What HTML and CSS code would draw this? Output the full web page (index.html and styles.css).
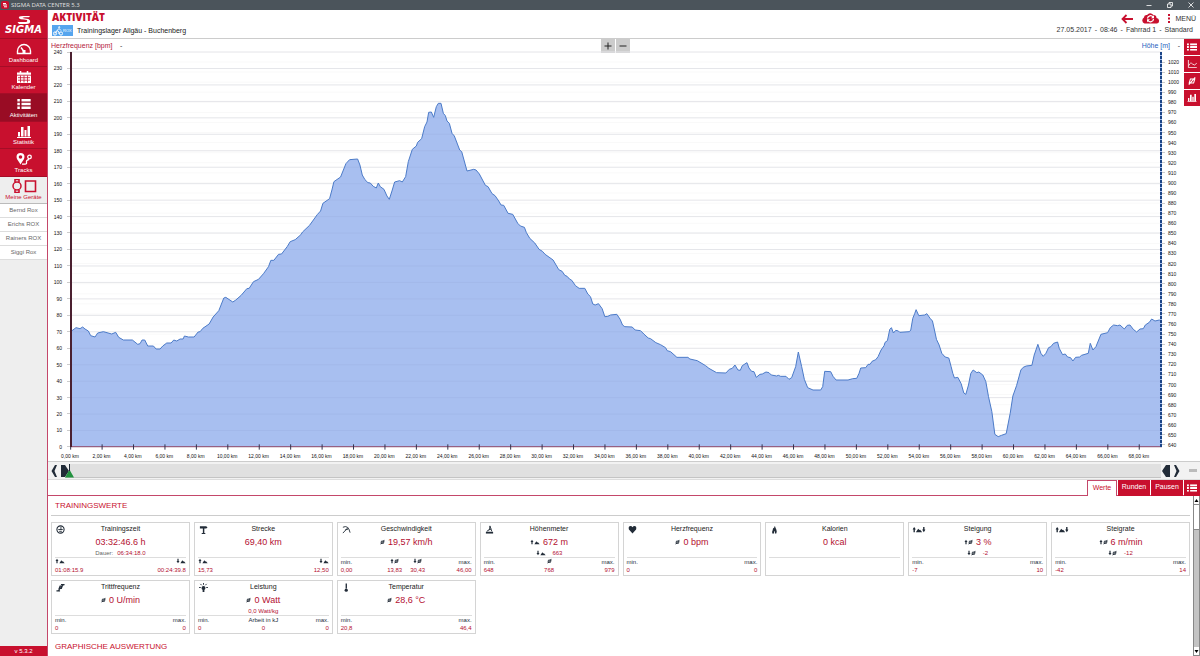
FILE: index.html
```html
<!DOCTYPE html>
<html lang="de">
<head>
    <meta charset="UTF-8">
    <meta name="viewport" content="width=device-width, initial-scale=1.0">
    <title>SIGMA DATA CENTER 5.3</title>
    <link rel="stylesheet" href="styles.css">
</head>
<body>

    <!-- shared icons -->
    <svg class="sprite" aria-hidden="true">
        <symbol id="up" viewBox="0 0 4 8"><path d="M2 1L4 4H2.8V7H1.2V4H0z"/></symbol>
        <symbol id="down" viewBox="0 0 4 8"><path d="M2 7L4 4H2.8V1H1.2V4H0z"/></symbol>
        <symbol id="hill" viewBox="0 0 7 8"><path d="M0 7L2.6 3L4 4.6L4.8 4.2L7 7z"/></symbol>
        <symbol id="avg" viewBox="0 0 6 8"><path d="M0.6 7L5.6 1.2M1.6 2.800H5L4.300 5.800H1z" fill="none" stroke="currentColor" stroke-width="1.2"/></symbol>
        <symbol id="list" viewBox="0 0 16 12"><path d="M0 0h3v3H0zM5 0h11v3H5zM0 4.5h3v3H0zM5 4.5h11v3H5zM0 9h3v3H0zM5 9h11v3H5z"/></symbol>
        <symbol id="bars" viewBox="0 0 14 12"><path d="M0 11h14v1H0zM1 6h2v4.500H1zM4 1h2.500v9.500H4zM7.500 4h2v6.500h-2zM10.500 0h2.500v10.500h-2.500z"/></symbol>
    </svg>

    <div class="titlebar">
        <svg class="app-icon" viewBox="0 0 8 8"><rect width="8" height="8" rx="2" fill="#c8102e"/><path d="M2 2.500h3M2 4h4M3 5.800h3" stroke="#fff"/></svg>
        <span class="app-name">SIGMA DATA CENTER 5.3</span>
        <div class="window-buttons">
            <button aria-label="Minimieren"><svg viewBox="0 0 6 6"><path d="M0.500 3.500h5"/></svg></button>
            <button aria-label="Verkleinern"><svg viewBox="0 0 6 6"><path d="M0.500 2h3.500v3.500h-3.500zM2 2V0.500h3.500V4H4"/></svg></button>
            <button aria-label="Schließen"><svg viewBox="0 0 6 6"><path d="M0.500 0.500l5 5M5.500 0.500l-5 5"/></svg></button>
        </div>
    </div>

    <div class="app">
        <aside class="sidebar">
            <div class="logo">
                <svg viewBox="0 0 14 9"><path d="M13 1H6Q1 1 2 3.200Q3 4.500 7 4.500L10 5Q11 7 8 7H0.500L2 9H9Q14 9 13 5.500Q12 3.500 8 3.500L5.500 3Q6 2.200 8 2.200H12z"/></svg>
                <span>SIGMA</span>
            </div>
            <nav class="menu">
                <a href="#dashboard">
                    <svg viewBox="0 0 16 12"><path d="M1.500 10.500V8a6.500 6.500 0 0 1 13 0v2.500zM8 8.500L5 4.500" fill="none" stroke="#fff" stroke-width="1.400"/><path d="M6.500 7h3v3h-3z"/></svg>
                    Dashboard
                </a>
                <a href="#kalender">
                    <svg viewBox="0 0 16 12"><path d="M1 1.500h14V12H1z"/><path d="M4.500 0v3M11.500 0v3" stroke="#fff" stroke-width="1.500"/><path d="M1 4.200h14M2 6.700h12M2 9.200h12M4.500 4.500v7M8 4.500v7M11.500 4.500v7" stroke="#c8102e" stroke-width=".8"/></svg>
                    Kalender
                </a>
                <a href="#aktivitaeten" class="active">
                    <svg viewBox="0 0 16 12"><use href="#list" y="1" height="10"/></svg>
                    Aktivitäten
                </a>
                <a href="#statistik">
                    <svg viewBox="0 0 16 12"><use href="#bars"/></svg>
                    Statistik
                </a>
                <a href="#tracks">
                    <svg viewBox="0 0 16 12"><path fill-rule="evenodd" d="M4.500 0a4 4 0 0 1 4 4c0 2.500-3 5-4 7.500C3.500 9 0.500 6.500 0.500 4a4 4 0 0 1 4-4zm0 2.200a1.800 1.800 0 1 0 0 3.600a1.800 1.800 0 0 0 0-3.600z"/><path d="M6 11.200h3q2 0 1.500-2t2.500-2.700" fill="none" stroke="#fff" stroke-width="1.300"/><circle cx="13.500" cy="4" r="1.800" fill="none" stroke="#fff" stroke-width="1.300"/></svg>
                    Tracks
                </a>
                <a href="#geraete" class="devices">
                    <svg viewBox="0 0 26 14"><path d="M4 3V0.500h4V3M4 11v2.500h4V11M14.500 2h10v10.500h-10z" fill="none" stroke="#c8102e" stroke-width="1.600"/><circle cx="6" cy="7" r="4" fill="none" stroke="#c8102e" stroke-width="1.500"/></svg>
                    Meine Geräte
                </a>
            </nav>
            <ul class="device-list">
                <li>Bernd Rox</li>
                <li>Erichs ROX</li>
                <li>Rainers ROX</li>
                <li>Siggi Rox</li>
            </ul>
            <div class="version">v 5.3.2</div>
        </aside>

        <main class="main">
            <header class="header">
                <div class="header-left">
                    <h1>AKTIVITÄT</h1>
                    <div class="activity">
                        <span class="sport">
                            <svg viewBox="0 0 10 10"><circle cx="2" cy="7.500" r="1.600"/><circle cx="8" cy="7.500" r="1.600"/><path d="M2 7.500L4 4.500L6 6V8M4 4.500L6 2.500L8 4.500"/><circle cx="6.200" cy="1.200" r=".6"/></svg>
                            ROX
                        </span>
                        <span class="activity-name">Trainingslager Allgäu - Buchenberg</span>
                    </div>
                </div>
                <div class="header-right">
                    <div class="actions">
                        <button aria-label="Zurück"><svg class="back" viewBox="0 0 12 10"><path d="M12 5H1.500M5.500 1L1.500 5L5.500 9" fill="none" stroke="#c8102e" stroke-width="1.800"/></svg></button>
                        <button aria-label="Cloud-Synchronisation"><svg class="cloud" viewBox="0 0 19 11"><path d="M3.500 10.500a3.300 3.300 0 0 1-.5-6Q3 1.500 6 2Q9-1.500 12.500 2Q15.500 2 15.500 5A2.800 2.800 0 0 1 16 10.500z" fill="#c8102e"/><path d="M6.500 5.500A3 3 0 0 1 12 4M12.500 6A3 3 0 0 1 7 7.500" fill="none" stroke="#fff" stroke-width="1.300"/><path d="M13 2.200V5.200H10zM6 9.300V6.300H9z" fill="#fff"/></svg></button>
                        <button class="menu-button"><svg class="dots" viewBox="0 0 2 9"><path d="M0 0h2v2H0zM0 3.500h2v2H0zM0 7h2v2H0z" fill="#c8102e"/></svg>MENÜ</button>
                    </div>
                    <div class="meta">
                        <span>27.05.2017</span><span>-</span><span>08:46</span><span>-</span><span>Fahrrad 1</span><span>-</span><span>Standard</span>
                    </div>
                </div>
            </header>

            <section class="chart-panel">
                <div class="chart">
                    <div class="chart-head">
                        <div class="series">
                            <select class="left-series" aria-label="Linke Achse"><option>Herzfrequenz [bpm]</option></select>
                            <span>-</span>
                        </div>
                        <div class="zoom-buttons">
                            <button aria-label="Vergrößern"><svg viewBox="0 0 8 8"><path d="M4 0.500v7M0.500 4h7"/></svg></button>
                            <button aria-label="Verkleinern"><svg viewBox="0 0 8 8"><path d="M0.500 4h7"/></svg></button>
                        </div>
                        <div class="series series-right">
                            <select class="right-series" aria-label="Rechte Achse"><option>Höhe [m]</option></select>
                            <span>-</span>
                        </div>
                    </div>
                    <div class="plot-row">
                        <div class="axis axis-left" id="heartAxis"></div>
                        <svg class="plot" viewBox="0 0 3273 1185" preserveAspectRatio="none" role="img" aria-label="Höhenprofil">
                            <g class="grid-lines" id="gridLines"></g>
                            <polygon class="altitude-fill" id="altitudeFill"/>
                            <g class="grid-over" id="gridOver"></g>
                            <polyline class="altitude-line" id="altitudeLine"/>
                            <path class="axis-bottom" d="M0 1184H3273"/>
                            <g class="x-ticks" id="xTicks"></g>
                            <path class="edge-left" d="M3 0V1185"/>
                            <path class="edge-right" d="M3270 0V1185"/>
                            <path class="edge-dash" d="M3270 0V1185"/>
                        </svg>
                        <div class="axis axis-right" id="altitudeAxis"></div>
                    </div>
                    <div class="axis-x" id="distanceAxis"></div>
                </div>
                <div class="tools">
                    <button aria-label="Liste"><svg viewBox="0 0 16 12"><use href="#list"/></svg></button>
                    <button aria-label="Kurven"><svg viewBox="0 0 12 10"><path d="M1.500 0v9.500H12M2 7Q4 2 6.500 5T12 4" fill="none" stroke="#fff"/></svg></button>
                    <button aria-label="Durchschnitt"><svg viewBox="0 0 12 10"><path d="M2 9.500L10 0.500M4 2.500H9.500L8 7.500H2.500z" fill="none" stroke="#fff" stroke-width="1.300"/></svg></button>
                    <button aria-label="Balken"><svg viewBox="0 0 14 12"><use href="#bars"/></svg></button>
                </div>
            </section>

            <div class="range">
                <button aria-label="Zurückblättern"><svg viewBox="0 0 6 12"><path d="M4 0h2L3.500 6L6 12H4L0.500 6z"/></svg></button>
                <svg class="grip" viewBox="0 0 8 12"><path d="M0 0h4l4 6l-4 6H0z"/></svg>
                <input type="range" min="0" max="69" value="0" aria-label="Position">
                <svg class="grip" viewBox="0 0 8 12"><path d="M8 0H4L0 6l4 6h4z"/></svg>
                <button aria-label="Weiterblättern"><svg viewBox="0 0 6 12"><path d="M2 0H0L2.500 6L0 12H2L5.500 6z"/></svg></button>
                <button class="collapse" aria-label="Einklappen"></button>
            </div>

            <div class="tabs">
                <button class="current">Werte</button>
                <button>Runden</button>
                <button>Pausen</button>
                <button class="tab-list" aria-label="Liste"><svg viewBox="0 0 16 12"><use href="#list"/></svg></button>
            </div>

            <div class="results">
                <div class="values">
                    <h2>TRAININGSWERTE</h2>
                    <div class="cards">
                        <article class="card">
                            <div class="card-title">
                                <svg viewBox="0 0 10 10"><circle cx="5" cy="5" r="4" fill="none" stroke="#222c38" stroke-width="1.200"/><path d="M5.500 2V5H2.500M5 5h2.500M3.500 7h3" fill="none" stroke="#222c38"/></svg>
                                <h3>Trainingszeit</h3>
                            </div>
                            <div class="value">03:32:46.6 h</div>
                            <div class="sub"><span>Dauer:</span> 06:34:18.0</div>
                            <div class="foot">
                                <div><span><svg class="u"><use href="#up"/></svg><svg class="h"><use href="#hill"/></svg></span><b>01:08:15.9</b></div>
                                <div class="last"><span><svg class="u"><use href="#down"/></svg><svg class="h"><use href="#hill"/></svg></span><b>00:24:39.8</b></div>
                            </div>
                        </article>
                        <article class="card">
                            <div class="card-title">
                                <svg viewBox="0 0 10 10"><path d="M1 1.500h7l1.500 1.200L8 4H1zM4.300 4h1.600v5H4.300zM3 8.800h4V10H3z"/></svg>
                                <h3>Strecke</h3>
                            </div>
                            <div class="value">69,40 km</div>
                            <div class="sub"></div>
                            <div class="foot">
                                <div><span><svg class="u"><use href="#up"/></svg><svg class="h"><use href="#hill"/></svg></span><b>15,73</b></div>
                                <div class="last"><span><svg class="u"><use href="#down"/></svg><svg class="h"><use href="#hill"/></svg></span><b>12,50</b></div>
                            </div>
                        </article>
                        <article class="card">
                            <div class="card-title">
                                <svg viewBox="0 0 10 10"><path d="M1 2.500Q7-0.500 9 8.500M1 9L6.500 3M3.500 5.500L7 4.500" fill="none" stroke="#222c38"/></svg>
                                <h3>Geschwindigkeit</h3>
                            </div>
                            <div class="value"><svg class="a"><use href="#avg"/></svg>19,57 km/h</div>
                            <div class="sub"></div>
                            <div class="foot">
                                <div><span>min.</span><b>0,00</b></div>
                                <div class="mid">
                                    <div><span><svg class="u"><use href="#up"/></svg><svg class="a"><use href="#avg"/></svg></span><b>13,83</b></div>
                                    <div><span><svg class="u"><use href="#down"/></svg><svg class="a"><use href="#avg"/></svg></span><b>30,43</b></div>
                                </div>
                                <div class="last"><span>max.</span><b>46,00</b></div>
                            </div>
                        </article>
                        <article class="card">
                            <div class="card-title">
                                <svg viewBox="0 0 10 10"><path d="M1 7.500h8v2H1z"/><path d="M2 7L5 5L5.500 1L7.500 7M4 5.500L7 4.500" fill="none" stroke="#222c38"/></svg>
                                <h3>Höhenmeter</h3>
                            </div>
                            <div class="value"><svg class="u"><use href="#up"/></svg><svg class="h"><use href="#hill"/></svg>672 m</div>
                            <div class="sub"><svg class="u"><use href="#down"/></svg><svg class="h"><use href="#hill"/></svg>&nbsp; &nbsp; 663</div>
                            <div class="foot">
                                <div><span>min.</span><b>648</b></div>
                                <div class="mid"><div><span><svg class="a"><use href="#avg"/></svg></span><b>768</b></div></div>
                                <div class="last"><span>max.</span><b>979</b></div>
                            </div>
                        </article>
                        <article class="card">
                            <div class="card-title">
                                <svg viewBox="0 0 10 10"><path d="M5 9.500L1 5Q0 1.500 2.800 1.200Q4.300 1.200 5 2.500Q5.700 1.200 7.200 1.200Q10 1.500 9 5z"/></svg>
                                <h3>Herzfrequenz</h3>
                            </div>
                            <div class="value"><svg class="a"><use href="#avg"/></svg>0 bpm</div>
                            <div class="sub"></div>
                            <div class="foot">
                                <div><span>min.</span><b>0</b></div>
                                <div class="last"><span>max.</span><b>0</b></div>
                            </div>
                        </article>
                        <article class="card">
                            <div class="card-title">
                                <svg viewBox="0 0 10 10"><path d="M5.500 1Q6 3 7 5T7 9.500H5.500Q6 8 5 6.500Q4.500 8 4.500 9.500H2.500Q2 7.500 3 5.500L3.500 3L4.500 4Q4.500 2 5.500 1z"/></svg>
                                <h3>Kalorien</h3>
                            </div>
                            <div class="value">0 kcal</div>
                            <div class="sub"></div>
                            <div class="foot"></div>
                        </article>
                        <article class="card">
                            <div class="card-title">
                                <svg class="wide" viewBox="0 0 15 8"><use href="#up" width="4" height="8"/><use href="#hill" x="4" width="7" height="8"/><use href="#down" x="11" width="4" height="8"/></svg>
                                <h3>Steigung</h3>
                            </div>
                            <div class="value"><svg class="u"><use href="#up"/></svg><svg class="a"><use href="#avg"/></svg>3 %</div>
                            <div class="sub"><svg class="u"><use href="#down"/></svg><svg class="a"><use href="#avg"/></svg>&nbsp; &nbsp; -2</div>
                            <div class="foot">
                                <div><span>min.</span><b>-7</b></div>
                                <div class="last"><span>max.</span><b>10</b></div>
                            </div>
                        </article>
                        <article class="card">
                            <div class="card-title">
                                <svg class="wide" viewBox="0 0 15 8"><use href="#up" width="4" height="8"/><use href="#hill" x="4" width="7" height="8"/><use href="#down" x="11" width="4" height="8"/></svg>
                                <h3>Steigrate</h3>
                            </div>
                            <div class="value"><svg class="u"><use href="#up"/></svg><svg class="a"><use href="#avg"/></svg>6 m/min</div>
                            <div class="sub"><svg class="u"><use href="#down"/></svg><svg class="a"><use href="#avg"/></svg>&nbsp; &nbsp; -12</div>
                            <div class="foot">
                                <div><span>min.</span><b>-42</b></div>
                                <div class="last"><span>max.</span><b>14</b></div>
                            </div>
                        </article>
                        <article class="card">
                            <div class="card-title">
                                <svg viewBox="0 0 10 10"><path d="M5.500 1h4v1.500h-4zM0.500 8h4v1.500h-4z"/><path d="M8 2L2.500 8.500M4.500 3.500h2.500L6 6H3.500z" fill="none" stroke="#222c38" stroke-width="1.200"/></svg>
                                <h3>Trittfrequenz</h3>
                            </div>
                            <div class="value"><svg class="a"><use href="#avg"/></svg>0 U/min</div>
                            <div class="sub"></div>
                            <div class="foot">
                                <div><span>min.</span><b>0</b></div>
                                <div class="last"><span>max.</span><b>0</b></div>
                            </div>
                        </article>
                        <article class="card">
                            <div class="card-title">
                                <svg viewBox="0 0 10 10"><circle cx="5" cy="5.500" r="2.200"/><path d="M4 7h2v3H4z"/><path d="M0 5h2M8 5h2M1.500 1l1.500 1.500M8.500 1L7 2.500M5 0v2" stroke="#222c38"/></svg>
                                <h3>Leistung</h3>
                            </div>
                            <div class="value"><svg class="a"><use href="#avg"/></svg>0 Watt</div>
                            <div class="sub">0,0 Watt/kg</div>
                            <div class="foot">
                                <div><span>min.</span><b>0</b></div>
                                <div class="mid"><div><span>Arbeit in kJ</span><b>0</b></div></div>
                                <div class="last"><span>max.</span><b>0</b></div>
                            </div>
                        </article>
                        <article class="card">
                            <div class="card-title">
                                <svg viewBox="0 0 10 10"><path d="M4 0.500h1.500V6H4z"/><circle cx="4.700" cy="8" r="1.800"/></svg>
                                <h3>Temperatur</h3>
                            </div>
                            <div class="value"><svg class="a"><use href="#avg"/></svg>28,6 °C</div>
                            <div class="sub"></div>
                            <div class="foot">
                                <div><span>min.</span><b>20,8</b></div>
                                <div class="last"><span>max.</span><b>46,4</b></div>
                            </div>
                        </article>
                    </div>
                    <h2 class="next">GRAPHISCHE AUSWERTUNG</h2>
                </div>
                <div class="scrollbar">
                    <button aria-label="Nach oben"><svg viewBox="0 0 5 5"><path d="M2.500 1L4.500 4h-4z"/></svg></button>
                    <div class="thumb"></div>
                    <button class="scroll-down" aria-label="Nach unten"><svg viewBox="0 0 5 5"><path d="M2.500 4L4.500 1h-4z"/></svg></button>
                </div>
            </div>
        </main>
    </div>

    <script src="script.js"></script>
</body>
</html>
```

FILE: styles.css
```css
* {
    box-sizing: border-box;
}
body {
    margin: 0;
    height: 100vh;
    display: flex;
    flex-direction: column;
    font-family: "Liberation Sans", Arial, sans-serif;
    font-size: 7px;
    line-height: 8px;
    color: #333;
    background-color: #fff;
    overflow: hidden;
}
h1, h2, h3, ul {
    margin: 0;
    padding: 0;
}
button {
    display: flex;
    align-items: center;
    justify-content: center;
    padding: 0;
    border: none;
    background: none;
    font: inherit;
    color: inherit;
    cursor: pointer;
}
svg {
    display: block;
    flex: none;
}
.sprite {
    display: none;
}

/* window title */
.titlebar {
    display: flex;
    align-items: center;
    gap: 2px;
    height: 10px;
    padding: 0 6px 0 1px;
    background-color: #4b545b;
    color: #fff;
}
.app-icon {
    width: 8px;
    height: 8px;
}
.app-name {
    font-family: "Noto Sans", sans-serif;
    font-size: 6px;
    color: #ddd;
}
.window-buttons {
    display: flex;
    gap: 15px;
    margin-left: auto;
}
.window-buttons svg {
    width: 6px;
    height: 6px;
    fill: none;
    stroke: #fff;
    stroke-width: 0.8;
}
.app {
    display: flex;
    flex: 1;
    min-height: 0;
}

/* sidebar */
.sidebar {
    display: flex;
    flex-direction: column;
    width: 48px;
    background-color: #eee;
    border-right: 1px solid #c4476a;
    font-size: 6px;
    text-align: center;
}
.logo {
    height: 28px;
    padding-top: 5px;
    background-color: #c8102e;
    color: #fff;
    font-family: "DejaVu Sans", sans-serif;
    font-size: 10px;
    font-weight: bold;
    font-style: italic;
}
.logo svg {
    width: 14px;
    height: 9px;
    margin: 0 auto 2px;
    fill: #fff;
}
.menu {
    display: flex;
    flex-direction: column;
    height: 166px;
}
.menu a {
    display: flex;
    flex: 1;
    flex-direction: column;
    align-items: center;
    justify-content: space-between;
    padding: 4px 0 2px;
    border-top: 1px solid #a50d27;
    background-color: #c8102e;
    color: #fff;
    text-decoration: none;
}
.menu svg {
    width: 16px;
    height: 12px;
    fill: #fff;
}
.menu .active {
    background-color: #990c24;
}
.menu .devices {
    padding: 2px 0;
    background-color: #eee;
    color: #c8102e;
    border-bottom: 1px solid #bbb;
}
.menu .devices svg {
    width: 26px;
    height: 14px;
}
.device-list {
    list-style: none;
    color: #666;
}
.device-list li {
    height: 14px;
    line-height: 13px;
    background-color: #fff;
    border-bottom: 1px solid #ddd;
}
.version {
    margin-top: auto;
    line-height: 10px;
    background-color: #c8102e;
    color: #fff;
}

/* page header */
.main {
    display: flex;
    flex-direction: column;
    flex: 1;
    min-width: 0;
}
.header {
    display: flex;
    justify-content: space-between;
    height: 29px;
    padding: 1px 4px 0;
    border-bottom: 1px solid #ccc;
}
h1 {
    font-family: "Open Sans", sans-serif;
    font-size: 10px;
    font-weight: 800;
    line-height: 12px;
    color: #c8102e;
}
.activity {
    display: flex;
    align-items: center;
    gap: 4px;
    margin-top: 2px;
}
.sport {
    display: flex;
    align-items: center;
    width: 21px;
    height: 11px;
    padding-left: 1px;
    background-color: #56a5ee;
    color: #fff;
    font-size: 4px;
}
.sport svg {
    width: 10px;
    height: 10px;
    fill: none;
    stroke: #fff;
}
.activity-name {
    font-size: 7px;
    color: #222;
}
.header-right {
    display: flex;
    flex-direction: column;
    align-items: flex-end;
}
.actions {
    display: flex;
    gap: 8px;
    height: 15px;
}
.back {
    width: 12px;
    height: 10px;
}
.cloud {
    width: 19px;
    height: 11px;
}
.menu-button {
    gap: 5px;
}
.dots {
    width: 2px;
    height: 9px;
}
.meta {
    display: flex;
    gap: 3px;
    padding-right: 3px;
}

/* chart */
.chart-panel {
    display: flex;
    flex: 1;
    min-height: 0;
}
.chart {
    display: flex;
    flex-direction: column;
    flex: 1;
}
.chart-head {
    display: grid;
    grid-template-columns: 1fr auto 1fr;
    height: 13px;
    padding: 0 4px 0 3px;
}
.series {
    display: flex;
    align-items: center;
    gap: 7px;
}
.series-right {
    justify-content: flex-end;
}
.series select {
    appearance: none;
    padding: 0;
    border: none;
    background: none;
    font: inherit;
}
.series .left-series {
    color: #b3203c;
}
.series .right-series {
    color: #2a62c0;
}
.zoom-buttons {
    display: flex;
    gap: 1px;
}
.zoom-buttons button {
    width: 14px;
    height: 14px;
    background-color: #ccc;
}
.zoom-buttons svg {
    width: 8px;
    height: 8px;
    stroke: #222;
}
.plot-row {
    display: flex;
    flex: 1;
    min-height: 0;
}
.axis {
    display: flex;
    flex-direction: column;
    justify-content: space-between;
    width: 22px;
    font-size: 5px;
    color: #111;
}
.axis span {
    display: flex;
    align-items: center;
    height: 8px;
}
.axis span::after,
.axis-right span::before {
    content: "";
    width: 3px;
    height: 1px;
    background-color: #ccc;
}
.axis-left {
    margin: -4px 0;
}
.axis-left span {
    justify-content: flex-end;
    gap: 5px;
}
.axis-right {
    margin: 6px 0 -2px;
}
.axis-right span {
    gap: 3px;
}
.axis-right span::after {
    content: none;
}
.plot {
    flex: 1;
    width: 0;
    height: 100%;
    overflow: visible;
}
.plot path, .plot polyline {
    fill: none;
    vector-effect: non-scaling-stroke;
}
.grid-lines path {
    stroke: #f9f9f9;
}
.grid-lines .major {
    stroke: #f0f0f0;
}
.grid-over path {
    stroke: #6078a8;
    stroke-opacity: 0.08;
}
.altitude-fill {
    fill: #a8bff0;
}
.plot .altitude-line {
    stroke: #4c7bc8;
}
.axis-bottom {
    stroke: #93506f;
}
.x-ticks path {
    stroke: #33334d;
}
.edge-left {
    stroke: #4a2030;
    stroke-width: 2;
}
.edge-right {
    stroke: #a8bff0;
    stroke-width: 2;
}
.edge-dash {
    stroke: #1c4586;
    stroke-width: 2;
    stroke-dasharray: 3 1;
}
.axis-x {
    display: flex;
    justify-content: space-between;
    height: 14px;
    margin: 0 45px 0 22px;
    padding-top: 5px;
    font-size: 5px;
    color: #111;
}
.axis-x span {
    display: flex;
    justify-content: center;
    width: 0;
    white-space: nowrap;
}
.tools {
    display: flex;
    flex-direction: column;
    gap: 1px;
    width: 16px;
}
.tools button {
    height: 16px;
    background-color: #c8102e;
    color: #fff;
}
.tools svg {
    width: 10px;
    height: 8px;
    fill: #fff;
}

/* range bar under the chart */
.range {
    display: flex;
    align-items: center;
    height: 19px;
    padding: 0 3px;
    border-top: 1px solid #ccc;
    border-bottom: 1px solid #ddd;
    background-color: #f2f2f2;
}
.range svg {
    width: 6px;
    height: 12px;
    fill: #222c38;
}
.range .grip {
    width: 8px;
}
.range button {
    margin: 0 4px 0 0;
}
.range input {
    appearance: none;
    flex: 1;
    min-width: 0;
    height: 14px;
    margin: 0 1px 0 -4px;
    background: none;
}
.range input::-webkit-slider-runnable-track {
    height: 14px;
    background: linear-gradient(90deg, transparent 4px, #e0e0e0 4px);
    border-bottom: 1px solid #c4c4c4;
}
.range input::-webkit-slider-thumb {
    appearance: none;
    width: 9px;
    height: 14px;
    background: linear-gradient(#222c38 50%, #22923f 50%);
    clip-path: polygon(4px 0, 5px 0, 5px 7px, 9px 14px, 0 14px, 4px 7px);
}
.range .grip + button {
    margin: 0 9px 0 4px;
}
.range .collapse {
    width: 8px;
    height: 3px;
    margin: 0;
    background-color: #bbb;
}

/* tabs */
.tabs {
    display: flex;
    justify-content: flex-end;
    gap: 1px;
    height: 16px;
    border-bottom: 1px solid #c4476a;
}
.tabs button {
    width: 32px;
    height: 16px;
    padding-bottom: 2px;
    background-color: #c8102e;
    color: #fff;
}
.tabs .current {
    width: 30px;
    border: 1px solid #c4476a;
    border-bottom: none;
    background-color: #fff;
    color: #c8102e;
}
.tabs .tab-list {
    width: 16px;
    padding: 0;
}
.tab-list svg {
    width: 10px;
    height: 8px;
    fill: #fff;
}

/* values */
.results {
    display: flex;
}
.values {
    flex: 1;
    padding: 0 3px;
}
h2 {
    padding-left: 4px;
    border-bottom: 1px solid #ccc;
    font-size: 8px;
    font-weight: normal;
    line-height: 19px;
    color: #c8102e;
}
.next {
    margin-top: 3px;
    border: none;
}
.cards {
    display: grid;
    grid-template-columns: repeat(8, 1fr);
    gap: 4px;
    margin-top: 6px;
}
.card {
    padding: 0 3px 1px;
    border: 1px solid #d4d4d4;
    color: #222c38;
}
.card svg {
    fill: currentColor;
}
.card-title {
    display: grid;
    grid-template-columns: 16px 1fr 16px;
    align-items: center;
    height: 12px;
}
.card-title svg {
    width: 9px;
    height: 9px;
    margin-left: 1px;
}
.card-title .wide {
    width: 14px;
    height: 7px;
    margin-left: 0;
}
.card h3 {
    font-size: 7px;
    font-weight: normal;
    text-align: center;
    color: #222;
}
.value, .sub {
    display: flex;
    align-items: center;
    justify-content: center;
    color: #b30f31;
}
.value {
    height: 14px;
    font-size: 9px;
}
.sub {
    height: 8px;
    font-size: 6px;
}
.sub span {
    margin-right: 4px;
    color: #666;
}
.card .u, .card .h, .card .a {
    height: 6px;
    color: #222c38;
}
.card .u {
    width: 4px;
}
.card .h {
    width: 6px;
}
.card .a {
    width: 5px;
}
.value .a, .value .h {
    margin-right: 3px;
}
.foot {
    display: grid;
    grid-template-columns: 1fr auto 1fr;
    height: 17px;
    border-top: 1px solid #ddd;
    font-size: 6px;
}
.foot span, .foot b {
    display: flex;
    height: 8px;
    font-weight: normal;
}
.foot b {
    color: #b30f31;
}
.foot .mid {
    display: flex;
    gap: 8px;
}
.mid span, .mid b {
    justify-content: center;
}
.foot .last {
    grid-column: 3;
}
.last span, .last b {
    justify-content: flex-end;
}

.scrollbar {
    display: flex;
    flex-direction: column;
    width: 7px;
    border: 1px solid #888;
    border-top: none;
    background-color: #c4c4c4;
}
.scrollbar button {
    height: 8px;
    background-color: #fff;
}
.scrollbar svg {
    width: 5px;
    height: 5px;
}
.thumb {
    height: 26px;
    border-top: 1px solid #888;
    border-bottom: 1px solid #888;
    background-color: #fff;
}
.scrollbar .scroll-down {
    margin-top: auto;
}
```

FILE: script.js
```javascript
const PLOT_WIDTH = 3273;
const PLOT_HEIGHT = 1185;

// Altitude profile in plot units
const altitude = `0,838 6,836 18,827 30,830 38,825 45,831 55,837 62,851 75,855 83,843 100,839 125,846 137,841 146,856
160,864 187,864 203,877 210,875 216,864 224,864 233,882 250,882 258,891 270,891 278,882 290,873 303,873 311,864
320,867 330,861 339,861 343,852 355,855 372,855 384,840 390,839 398,829 417,816 429,795 446,776 461,738 467,736
488,750 497,744 513,730 530,710 537,709 550,689 565,682 580,665 595,644 602,625 611,625 625,607 634,606 651,584
660,569 675,563 692,548 697,540 718,520 741,488 751,477 758,454 778,440 785,414 791,389 811,375 827,335 838,323
862,321 869,339 876,369 884,383 893,392 900,393 909,403 918,408 924,393 930,404 941,412 950,432 957,442 965,417
973,390 988,386 996,390 1006,374 1014,329 1026,292 1038,282 1042,271 1054,260 1063,224 1070,210 1075,181 1083,180
1090,196 1098,164 1104,154 1112,154 1119,184 1125,191 1130,207 1137,214 1145,244 1152,252 1168,294 1174,299
1190,357 1210,352 1217,354 1227,366 1245,400 1253,404 1265,425 1274,431 1285,447 1292,459 1300,460 1313,484
1327,487 1342,514 1350,522 1362,526 1368,542 1378,559 1393,573 1406,592 1416,598 1424,607 1448,624 1465,653
1475,658 1483,670 1490,673 1497,681 1504,685 1515,701 1526,709 1543,709 1552,726 1560,734 1567,756 1574,759
1584,755 1595,770 1603,794 1612,793 1620,789 1639,787 1649,802 1656,819 1663,824 1685,825 1694,834 1710,836
1720,846 1733,858 1740,860 1756,872 1770,878 1785,887 1790,896 1800,899 1819,916 1852,916 1858,921 1880,926
1905,941 1915,949 1938,962 1966,963 1976,952 1985,949 1993,939 2002,954 2009,955 2015,941 2029,932 2035,948
2043,958 2050,959 2057,976 2068,967 2075,966 2086,960 2095,962 2102,969 2118,972 2123,970 2130,973 2146,973
2155,982 2163,977 2175,944 2183,900 2193,944 2201,982 2211,1007 2227,1014 2250,1014 2256,1004 2262,958 2280,959
2287,973 2296,984 2332,984 2346,980 2358,979 2365,964 2370,948 2385,947 2392,937 2398,937 2404,928 2415,923
2422,914 2431,894 2440,881 2443,871 2450,866 2457,832 2462,827 2468,843 2475,835 2483,837 2487,841 2516,839
2520,834 2526,799 2532,784 2536,773 2544,791 2562,789 2568,785 2578,799 2585,807 2591,834 2597,862 2605,879
2613,904 2623,915 2634,918 2641,944 2646,964 2651,978 2661,976 2671,995 2679,1023 2685,1027 2693,999 2700,964
2707,954 2718,962 2724,960 2736,969 2745,989 2753,1034 2763,1079 2772,1147 2782,1154 2792,1150 2806,1145
2818,1084 2826,1032 2837,1001 2850,954 2857,946 2866,942 2883,940 2890,909 2901,877 2910,904 2917,913 2925,904
2933,887 2940,884 2948,874 2960,870 2965,889 2975,908 2983,906 2990,915 2999,917 3006,927 3014,916 3026,915
3032,910 3052,904 3058,874 3066,894 3075,884 3090,847 3110,842 3118,827 3128,819 3140,821 3147,819 3160,831
3169,820 3177,819 3187,832 3197,840 3207,831 3217,830 3223,819 3235,811 3242,801 3252,807 3265,804 3273,811`;

document.getElementById('altitudeLine').setAttribute('points', altitude);
document.getElementById('altitudeFill').setAttribute('points', `0,${PLOT_HEIGHT} ${altitude} ${PLOT_WIDTH},${PLOT_HEIGHT}`);

function label(text) {
    return `<span>${text}</span>`;
}

// Left axis: heart rate with the main grid lines
let heartLabels = '';
let majorLines = '';
for (let bpm = 240; bpm >= 0; bpm -= 10) {
    heartLabels += label(bpm);
    const y = PLOT_HEIGHT - bpm / 240 * PLOT_HEIGHT;
    majorLines += `<path class="major" d="M0 ${y}H${PLOT_WIDTH}"/>`;
}
document.getElementById('heartAxis').innerHTML = heartLabels;

// Right axis: altitude with the fine grid lines
let altitudeLabels = '';
let fineLines = '';
for (let m = 1020; m >= 640; m -= 10) {
    altitudeLabels += label(m);
    const y = 1179 - (m - 640) / 10 * 30.24;
    fineLines += `<path d="M0 ${y}H${PLOT_WIDTH}"/>`;
}
document.getElementById('altitudeAxis').innerHTML = altitudeLabels;
document.getElementById('gridLines').innerHTML = fineLines + majorLines;

// The grid stays faintly visible over the filled area
document.getElementById('gridOver').innerHTML = majorLines;

// Distance axis
let distanceLabels = '';
let ticks = '';
for (let km = 0; km <= 68; km += 2) {
    distanceLabels += label(`${km},00 km`);
    const x = 2 + km * 47.1;
    ticks += `<path d="M${x} 1177V1193"/>`;
}
document.getElementById('distanceAxis').innerHTML = distanceLabels;
document.getElementById('xTicks').innerHTML = ticks;
```
